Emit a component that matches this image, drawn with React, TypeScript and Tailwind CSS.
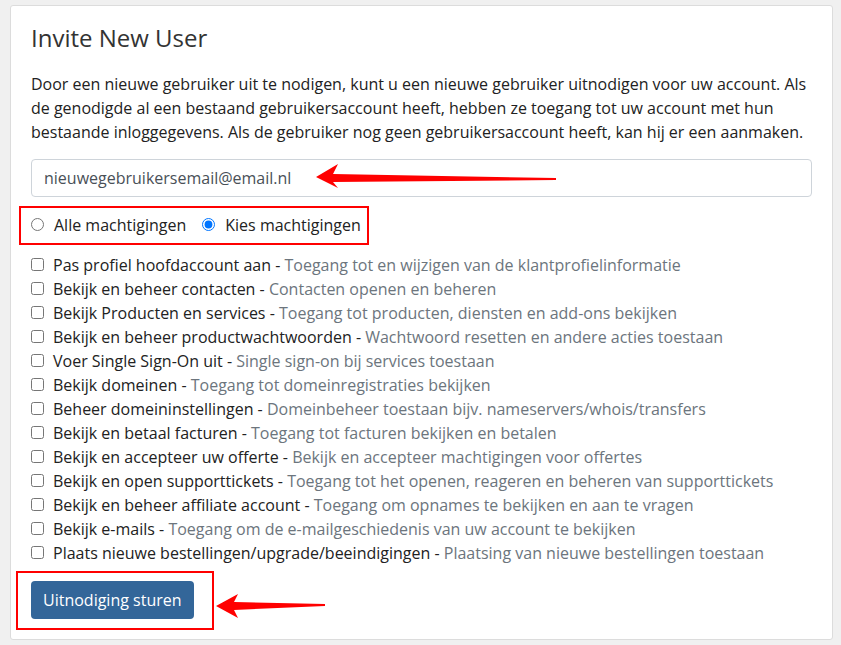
const permissions: [string, string][] = [
  ["Pas profiel hoofdaccount aan", "Toegang tot en wijzigen van de klantprofielinformatie"],
  ["Bekijk en beheer contacten", "Contacten openen en beheren"],
  ["Bekijk Producten en services", "Toegang tot producten, diensten en add-ons bekijken"],
  ["Bekijk en beheer productwachtwoorden", "Wachtwoord resetten en andere acties toestaan"],
  ["Voer Single Sign-On uit", "Single sign-on bij services toestaan"],
  ["Bekijk domeinen", "Toegang tot domeinregistraties bekijken"],
  ["Beheer domeininstellingen", "Domeinbeheer toestaan bijv. nameservers/whois/transfers"],
  ["Bekijk en betaal facturen", "Toegang tot facturen bekijken en betalen"],
  ["Bekijk en accepteer uw offerte", "Bekijk en accepteer machtigingen voor offertes"],
  ["Bekijk en open supporttickets", "Toegang tot het openen, reageren en beheren van supporttickets"],
  ["Bekijk en beheer affiliate account", "Toegang om opnames te bekijken en aan te vragen"],
  ["Bekijk e-mails", "Toegang om de e-mailgeschiedenis van uw account te bekijken"],
  ["Plaats nieuwe bestellingen/upgrade/beeindigingen", "Plaatsing van nieuwe bestellingen toestaan"],
];

export default function App() {
  return (
    <div className="relative min-h-screen bg-[#f0f0f0] pt-[5px] font-['Open_Sans',sans-serif] text-[#222]">
      <div className="ml-[10px] w-[823px] rounded-[3px] border border-[#dcdcdc] bg-white px-5 pt-[18px] pb-5">
        <h2 className="mb-[19px] text-[24px] leading-[1.2] font-normal text-[#333]">Invite New User</h2>
        <p className="mb-[15px] text-[16px] leading-6">
          Door een nieuwe gebruiker uit te nodigen, kunt u een nieuwe gebruiker uitnodigen voor uw account. Als de
          genodigde al een bestaand gebruikersaccount heeft, hebben ze toegang tot uw account met hun bestaande
          inloggegevens. Als de gebruiker nog geen gebruikersaccount heeft, kan hij er een aanmaken.
        </p>
        <input
          type="email"
          defaultValue="nieuwegebruikersemail@email.nl"
          className="mb-4 block h-[38px] w-full rounded-[4px] border border-[#ced4da] px-3 text-[16px] text-[#495057] outline-none"
        />
        <div className="mb-4 flex h-6 items-center text-[16px]">
          <label className="mr-4 flex items-center gap-[10px]">
            <input type="radio" name="perm" className="m-0 h-[13px] w-[13px]" />
            Alle machtigingen
          </label>
          <label className="flex items-center gap-[10px]">
            <input type="radio" name="perm" defaultChecked className="m-0 h-[13px] w-[13px]" />
            Kies machtigingen
          </label>
        </div>
        <ul className="mb-4">
          {permissions.map(([label, desc]) => (
            <li key={label} className="flex h-6 items-center text-[16px] leading-6">
              <input type="checkbox" className="m-0 mr-[9px] h-[13px] w-[13px]" />
              <span>
                {label} - <span className="text-[#6c757d]">{desc}</span>
              </span>
            </li>
          ))}
        </ul>
        <button className="h-[38px] rounded-[4px] bg-[#336699] px-3 text-[16px] text-white">Uitnodiging sturen</button>
      </div>

      {/* annotations */}
      <div className="pointer-events-none absolute top-[206px] left-[19px] h-[39px] w-[350px] border-2 border-[#f00]" />
      <div className="pointer-events-none absolute top-[571px] left-[16px] h-[59px] w-[198px] border-2 border-[#f00]" />
      <svg className="pointer-events-none absolute top-0 left-0" width="841" height="645">
        <polygon
          fill="#f00"
          points="316,177 338,164 333,174 556,178 556,180 333,182 338,188"
        />
        <polygon
          fill="#f00"
          points="216,606 238,594 234,602 325,604 325,606 234,610 238,618"
        />
      </svg>
    </div>
  );
}
